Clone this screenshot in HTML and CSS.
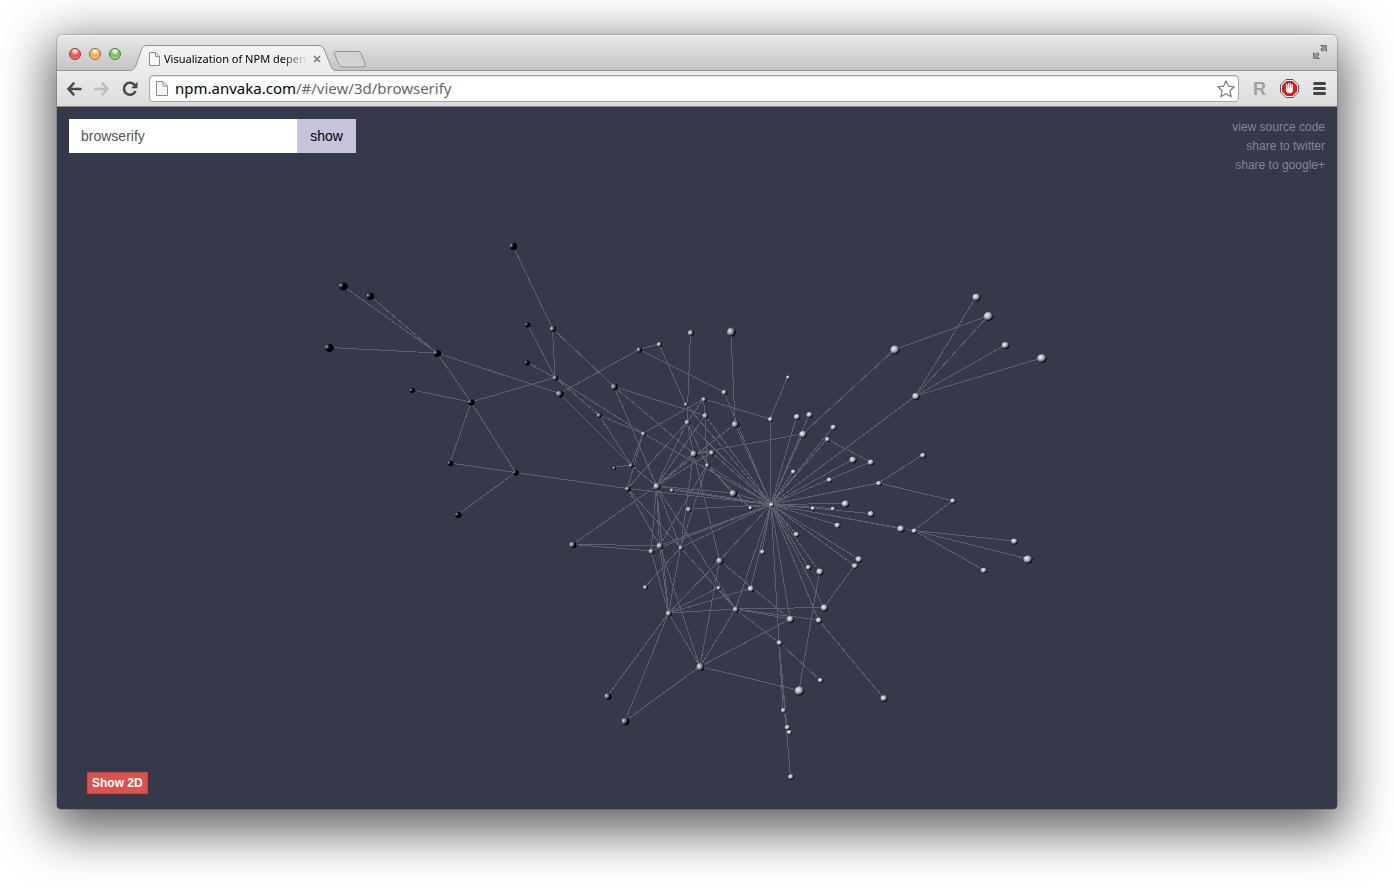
FILE: index.html
```html
<!DOCTYPE html>
<html lang="en">
<head>
<meta charset="utf-8">
<title>Visualization of NPM dependencies</title>
<link rel="stylesheet" href="styles.css">
</head>
<body>
<div class="window">
  <header class="tabbar">
    <div class="lights">
      <button class="light light-red" aria-label="Close"></button>
      <button class="light light-amber" aria-label="Minimize"></button>
      <button class="light light-green" aria-label="Zoom"></button>
    </div>
    <div class="tab">
      <svg class="tab-shape" viewBox="0 0 206 26" aria-hidden="true">
        <defs><linearGradient id="tabfill" x2="0" y2="1"><stop offset="0" stop-color="#f3f3f3"/><stop offset="1" stop-color="#ebebeb"/></linearGradient></defs>
        <path d="M0 25.5C4 25 5 23 6.500 19L11 6C12.500 2 13.500 .5 17 .5H188C192 .5 193 2 194.500 5L200 19C202 24 203 25 206 25.500V26H0Z" fill="url(#tabfill)"/>
        <path d="M0 25.500C4 25 5 23 6.500 19L11 6C12.500 2 13.500 .5 17 .5H188C192 .5 193 2 194.500 5L200 19C202 24 203 25 206 25.500" fill="none" stroke="#929292"/>
      </svg>
      <div class="tab-content">
        <svg class="page-icon" width="11" height="14" viewBox="0 0 11 14" aria-hidden="true"><path d="M.5.5H6.500L10.500 4.500V13.500H.5ZM6.500.5V4.500H10.500" fill="#fafafa" stroke="#8b8b8b"/></svg>
        <span class="tab-title">Visualization of NPM depen</span>
        <button class="tab-close" aria-label="Close tab"><svg width="8" height="8" viewBox="0 0 8 8"><path d="M1 1L7 7M7 1L1 7" stroke="#777" stroke-width="1.600"/></svg></button>
      </div>
    </div>
    <button class="new-tab" aria-label="New tab"><svg width="33" height="17" viewBox="0 0 33 17"><path d="M3 .5H25Q27.500.5 28.500 3L32 13Q33 16 30 16H10Q7 16 6 13.500L1.500 3Q.5.5 3 .5Z" fill="#d2d2d2" stroke="#969696"/></svg></button>
    <button class="fullscreen" aria-label="Full screen"><svg width="14" height="14" viewBox="0 0 14 14"><path d="M7.500 .5H13.500V6.500L11.500 4.500L9.500 6.500L7.500 4.500L9.500 2.500ZM6.500 13.500H.5V7.500L2.500 9.500L4.500 7.500L6.500 9.500L4.500 11.500Z" fill="#939393" stroke="#777"/></svg></button>
  </header>
  <nav class="toolbar">
    <button class="nav" aria-label="Back"><svg width="16" height="14" viewBox="0 0 16 14"><path d="M7.500 1.500L2.500 7L7.500 12.500M2.500 7H14.500" fill="none" stroke="#4a4a4a" stroke-width="2.600" stroke-linecap="round"/></svg></button>
    <button class="nav" aria-label="Forward"><svg width="16" height="14" viewBox="0 0 16 14"><path d="M8.500 1.500L13.500 7L8.500 12.500M13.500 7H1.500" fill="none" stroke="#bdbdbd" stroke-width="2.600" stroke-linecap="round"/></svg></button>
    <button class="nav" aria-label="Reload"><svg width="16" height="16" viewBox="0 0 16 16"><path d="M12.800 4.200A6 6 0 1 0 13.500 10" fill="none" stroke="#4a4a4a" stroke-width="2.600"/><path d="M15.500 .8V7.200H9Z" fill="#4a4a4a"/></svg></button>
    <div class="omnibox">
      <svg class="page-icon" width="12" height="15" viewBox="0 0 12 15" aria-hidden="true"><path d="M.5.5H7L11.500 5V14.500H.5ZM7 .5V5H11.500" fill="#f6f6f6" stroke="#8b8b8b"/></svg>
      <div class="url" role="textbox" aria-label="Address"><span class="host">npm.anvaka.com</span>/#/view/3d/browserify</div>
      <button class="nav" aria-label="Bookmark"><svg width="18" height="18" viewBox="0 0 18 18"><path d="M9 .8L11.400 6.200L17.300 6.800L12.900 10.800L14.200 16.800L9 13.700L3.800 16.800L5.100 10.800L.7 6.800L6.600 6.200Z" fill="#fff" stroke="#7c7c7c" stroke-width="1.200" stroke-linejoin="round"/></svg></button>
    </div>
    <div class="extensions">
      <button class="ext-r">R</button>
      <button class="nav" aria-label="Ad blocker"><svg width="19" height="19" viewBox="0 0 19 19"><path d="M6 .5H13L18.500 6V13L13 18.500H6L.5 13V6Z" fill="#fff" stroke="#555"/><path d="M6.500 2H12.500L17 6.500V12.500L12.500 17H6.500L2 12.500V6.500Z" fill="#e0191b"/><path d="M6.600 9.500V6M8.500 9V4.800M10.400 9V4.900M12.200 10V6" stroke="#fff" stroke-width="1.400" stroke-linecap="round"/><path d="M5.900 8.500H12.900V11C12.900 13 11.800 14.300 9.600 14.300C7.700 14.300 6.700 13.300 5.900 12Z" fill="#fff"/></svg></button>
      <button class="nav" aria-label="Menu"><svg width="13" height="13" viewBox="0 0 13 13"><path d="M1.500 1.500H11.500M1.500 6.500H11.500M1.500 11.500H11.500" stroke="#444" stroke-width="3" stroke-linecap="round"/></svg></button>
    </div>
  </nav>
  <main class="page">
    <svg class="graph" viewBox="57 107 1280 702" role="img" aria-label="Dependency graph">
      <defs>
        <radialGradient id="night" cx=".12" cy=".3" r=".5"><stop offset="0" stop-color="#c0c0cc"/><stop offset=".6" stop-color="#22232a"/><stop offset="1" stop-color="#000"/></radialGradient>
        <radialGradient id="dusk" cx=".2" cy=".35" r=".65"><stop offset="0" stop-color="#dcdce6"/><stop offset=".5" stop-color="#6a6a73"/><stop offset="1" stop-color="#000"/></radialGradient>
        <radialGradient id="dawn" cx=".28" cy=".36" r=".68"><stop offset="0" stop-color="#e8e8f0"/><stop offset=".5" stop-color="#8e8e98"/><stop offset="1" stop-color="#000"/></radialGradient>
        <radialGradient id="day" cx=".34" cy=".34" r=".66"><stop offset="0" stop-color="#f4f4fa"/><stop offset=".55" stop-color="#a2a2ae"/><stop offset="1" stop-color="#000"/></radialGradient>
      </defs>
      <path id="links" class="links"/>
      <g id="nodes"></g>
    </svg>
    <form class="search" onsubmit="return false">
      <input class="search-input" type="text" value="browserify" aria-label="Package name">
      <button class="search-button" type="submit">show</button>
    </form>
    <div class="links-menu">
      <a href="#source">view source code</a>
      <a href="#twitter">share to twitter</a>
      <a href="#google">share to google+</a>
    </div>
    <button class="mode">Show 2D</button>
  </main>
</div>
<script src="graph.js"></script>
</body>
</html>
```
FILE: styles.css
```css
* { box-sizing: border-box; }
body {
  margin: 0;
  min-height: 100vh;
  padding: 35px 57px 79px;
  display: flex;
  background: #fff;
  font-family: "Liberation Sans", Arial, sans-serif;
}
button { border: 0; padding: 0; background: none; font: inherit; cursor: pointer; }
svg { display: block; }
.window {
  flex: 1;
  min-width: 0;
  display: flex;
  flex-direction: column;
  border-radius: 5px 5px 4px 4px;
  background: #36394a;
  box-shadow: 0 0 0 1px rgba(0, 0, 0, .15), 0 15px 50px 8px rgba(0, 0, 0, .62);
}
.tabbar {
  display: flex;
  align-items: flex-end;
  height: 36px;
  padding: 0 10px 0 12px;
  border-radius: 5px 5px 0 0;
  border-bottom: 1px solid #969696;
  background: linear-gradient(#e8e8e8, #c4c4c4);
  box-shadow: inset 0 1px #f4f4f4;
}
.lights { display: flex; gap: 8px; padding-bottom: 10px; }
.light {
  width: 12px;
  height: 12px;
  border-radius: 50%;
  border: 1px solid;
}
.light-red { border-color: #9a3734; background: radial-gradient(circle at 50% 20%, #ffe5e0 8%, #ee4a4a 50%, #fa8d88); }
.light-amber { border-color: #9c6a2a; background: radial-gradient(circle at 50% 20%, #fff6df 8%, #f2a844 50%, #fde08a); }
.light-green { border-color: #487a36; background: radial-gradient(circle at 50% 20%, #effde4 8%, #76bb5f 50%, #bcec98); }
.tab {
  display: grid;
  width: 206px;
  height: 26px;
  margin: 0 0 -1px 9px;
}
.tab > * { grid-area: 1 / 1; }
.tab-shape { width: 206px; height: 26px; }
.tab-content { display: flex; align-items: center; padding: 2px 15px 0 19px; min-width: 0; }
.tab-title {
  flex: 1;
  min-width: 0;
  margin-left: 4px;
  white-space: nowrap;
  font: 11px/16px "Noto Sans", sans-serif;
  color: #000;
  -webkit-mask-image: linear-gradient(90deg, #000 82%, transparent);
  mask-image: linear-gradient(90deg, #000 82%, transparent);
}
.tab-close { margin: 0 0 0 6px; }
.new-tab { margin: 0 auto 2px -3px; }
.fullscreen { padding-bottom: 11px; }
.toolbar {
  display: flex;
  align-items: center;
  gap: 12px;
  height: 36px;
  padding: 0 11px 0 9px;
  border-bottom: 1px solid #8c8c8c;
  background: linear-gradient(#ebebeb, #dcdcdc);
}
.nav { flex: none; }
.omnibox {
  flex: 1;
  min-width: 0;
  display: flex;
  align-items: center;
  height: 27px;
  margin-left: -1px;
  padding: 0 3px 0 6px;
  border: 1px solid #a5a5a5;
  border-radius: 4px;
  background: #fff;
  box-shadow: inset 0 1px 1px #ddd;
}
.url {
  flex: 1;
  margin-left: 7px;
  padding-bottom: 1px;
  white-space: nowrap;
  font: 15px/22px "Noto Sans", sans-serif;
  color: #666;
}
.host { color: #000; }
.extensions { display: flex; align-items: center; gap: 14px; margin-left: 2px; }
.ext-r { font-size: 18px; font-weight: 700; line-height: 20px; color: #a0a0a0; }
.page {
  flex: 1;
  display: grid;
  grid-template: 1fr auto / 1fr auto;
  align-items: start;
  padding: 11px 12px 15px;
  position: relative;
  border-radius: 0 0 4px 4px;
}
.graph { position: absolute; inset: 0; width: 100%; height: 100%; }
.links { fill: none; stroke: #5d5f6e; stroke-width: 1; shape-rendering: crispEdges; }
.search { display: flex; position: relative; margin-top: 1px; }
.search-input {
  width: 228px;
  height: 34px;
  padding: 0 12px;
  border: 0;
  border-radius: 0;
  background: #fff;
  font: 14px/20px "Liberation Sans", Arial, sans-serif;
  color: #555;
}
.search-button {
  width: 59px;
  height: 34px;
  background: #c6c3da;
  font-size: 14px;
  color: #000;
}
.links-menu {
  position: relative;
  display: flex;
  flex-direction: column;
  align-items: flex-end;
}
.links-menu a { font-size: 12px; line-height: 19px; color: #83839b; text-decoration: none; }
.mode {
  position: relative;
  justify-self: start;
  margin-left: 18px;
  height: 22px;
  padding: 0 4px;
  border: 1px solid #d43f3a;
  background: #d9534f;
  font-size: 12px;
  font-weight: 700;
  color: #fff;
}
```
FILE: graph.js
```js
// Each node: x, y, radius.
const nodes = [
  [513,246,3],[343,286,3.5],[370,296,3],[329,347.5,3.5],[437,353,3],[412,390,2],[471,402,2.5],[527.5,324.5,2],[552.5,328.5,2.5],[527,362.5,2],
  [555,377.5,2],[559.5,393.5,3],[450,463,2.3],[515.5,472.5,2.3],[458,514.5,2.5],[639,349.5,2.3],[659,344,2.2],[614,386.5,2.8],[599,415,2],[643,433.5,2],
  [690.5,332.5,2.6],[731,331.5,4],[724,392,2.4],[685.5,404,1.6],[703.5,399,2.2],[705,415.5,2.6],[687,422,2.4],[735,424,3.1],[787.5,377,1.5],[770,419,2],
  [796.5,416.5,2.6],[802.5,434,3.2],[809,414.5,2.5],[833,427,2.3],[827,439,2],[693.5,453.5,3],[711.5,452.5,2.4],[707,465,2],[631,465,2],[614,467.5,1.3],
  [627.5,488.5,2.3],[656.5,486,3],[671.5,490,1.6],[733,493,3.2],[688.5,509,2.4],[750,507.5,1.6],[771,504.5,2],[793,471.5,2],[852.5,459.5,2.9],[870.5,462,2.5],
  [829,479.5,2.2],[878.5,483,2.2],[922.5,455,2.2],[952.5,500.5,2],[845,503.5,3.2],[812.5,508,1.8],[832.5,508.5,1.8],[870.5,513.5,2.6],[837,525,2.4],[796,534,2.2],
  [900.5,528.5,3],[914,530.5,2.2],[1014,541,2.6],[1027.5,559,3.7],[983.5,570,2.4],[894.5,349.5,4],[976,297,3.3],[988,316,4],[1005,345,3],[1041.5,358,3.9],
  [915.5,396,3],[858.5,559,2.8],[854.5,565.5,2.4],[819.5,571.5,3],[808,567,2.2],[762,551.5,2],[719.5,560.5,3.2],[718.5,587.5,2],[750.5,588.5,2.8],[735.5,609,2.6],
  [790,619,3],[824,607.5,3],[818.5,620,2.5],[779,642.5,2.3],[820,680,2],[799,690.5,4.2],[883.5,698,2.8],[783,710,2],[787,727,2.2],[789,732,2],
  [790.5,776.5,2.3],[700,666.5,3.5],[668.5,613,2.6],[607.5,696,2.8],[625,721,3.3],[572.5,544.5,2.9],[651,551,2.4],[659.5,545.5,2.9],[680.5,547.5,2],[645,587,2]
];

// Adjacency: node index, then the nodes it links to.
const adjacency = {
  46: [19,22,23,25,26,27,29,30,31,32,33,34,36,37,40,41,42,43,44,45,47,48,50,51,54,55,56,57,58,59,60,61,70,71,72,73,74,75,76,78,79,80,81,82,83,96,97,98],
  4: [1,2,3,6,11], 6: [5,10,12,13], 13: [12,14,40], 8: [0,10,17], 10: [7,9,18,19],
  18: [19,38], 11: [15,38], 15: [16,22], 16: [23], 26: [20,24,35,37,40,41], 27: [21,41],
  17: [25,35,41], 19: [24,38,40], 24: [25,29], 25: [37,41], 35: [31,36,41,76,98],
  36: [41], 37: [43,97,98], 38: [39,41], 40: [97,98], 41: [43,92,95,96,97,98,79],
  95: [96,97], 92: [76,77,78,79,91,93,94,96,97,98], 98: [79,99], 76: [80,92,91], 77: [79],
  79: [80,81,82,83,91], 91: [80,85,94,97], 83: [84,87,88,90], 82: [86], 81: [72], 85: [73],
  61: [53,62,63,64], 51: [52,53], 49: [34,50], 31: [65], 65: [67], 70: [66,67,68,69],
  28: [29], 87: [89], 45: [37]
};

const shade = x => x < 545 ? "night" : x < 640 ? "dusk" : x < 750 ? "dawn" : "day";

document.getElementById("links").setAttribute("d",
  Object.entries(adjacency).map(([from, targets]) => targets.map(to =>
    `M${nodes[from][0]} ${nodes[from][1]}L${nodes[to][0]} ${nodes[to][1]}`).join("")).join(""));

// Spheres are centred on pixel middles and widen towards the sides of the view.
const group = document.getElementById("nodes");
nodes.forEach(([x, y, r]) => {
  const c = document.createElementNS("http://www.w3.org/2000/svg", "ellipse");
  c.setAttribute("cx", x + 0.5);
  c.setAttribute("cy", y + 0.5);
  c.setAttribute("rx", r + 0.4 + Math.abs(x - 697) / 700);
  c.setAttribute("ry", r + 0.4);
  c.setAttribute("fill", `url(#${shade(x)})`);
  group.append(c);
});
```
